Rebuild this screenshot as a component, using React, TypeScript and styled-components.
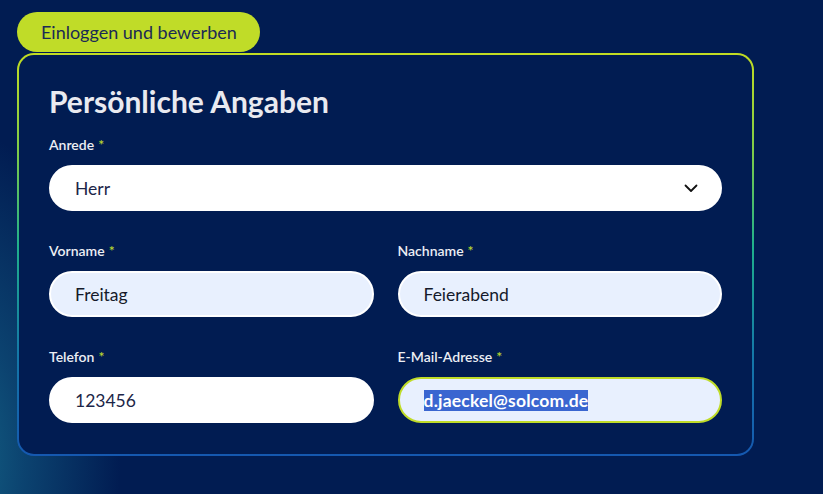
import React from "react";
import styled, { createGlobalStyle } from "styled-components";

const GlobalStyle = createGlobalStyle`
  html, body {
    margin: 0;
    padding: 0;
    background: #011c52;
  }
  body {
    font-family: Lato, "Open Sans", sans-serif;
    min-height: 494px;
    background:
      radial-gradient(ellipse 160px 330px at -40px 460px, rgba(20, 100, 134, 1) 0%, rgba(15, 80, 122, 0.75) 40%, rgba(1, 28, 82, 0) 100%),
      #011c52;
  }
`;

const Page = styled.div`
  padding: 12px 0 0 17px;
  min-height: 494px;
  box-sizing: border-box;
`;

const Tab = styled.button`
  display: flex;
  align-items: center;
  height: 40px;
  width: 243px;
  padding: 0 0 0 24px;
  border: none;
  border-radius: 20px;
  background: #c0dc28;
  color: #1b2a55;
  font-family: Lato, sans-serif;
  font-size: 18px;
  cursor: pointer;
  position: relative;
  z-index: 1;
`;

const Card = styled.section`
  box-sizing: border-box;
  width: 737px;
  margin-top: 1px;
  padding: 28px 30px 31px 30px;
  border: 2px solid transparent;
  border-radius: 17px;
  background:
    linear-gradient(#011c52, #011c52) padding-box,
    linear-gradient(180deg, #c2dc22 0%, #7ccb4a 25%, #1fb08c 48%, #1478a8 75%, #1558b0 100%) border-box;
`;

const Title = styled.h2`
  margin: 0 0 17px 0;
  color: #e9eaf0;
  font-size: 30px;
  line-height: 36px;
  font-weight: 700;
`;

const Grid = styled.div`
  display: grid;
  grid-template-columns: 1fr 1fr;
  column-gap: 24px;
  row-gap: 31px;
`;

const Field = styled.div<{ $wide?: boolean }>`
  display: flex;
  flex-direction: column;
  grid-column: ${(p) => (p.$wide ? "1 / -1" : "auto")};
`;

const Label = styled.label`
  display: block;
  height: 18px;
  color: #eceef4;
  font-size: 14px;
  font-weight: 600;
  line-height: 18px;
  margin-bottom: 11px;
`;

const Star = styled.span`
  color: #b9d62e;
  margin-left: 4px;
`;

const Control = styled.div<{ $fill?: string; $ring?: string }>`
  box-sizing: border-box;
  height: 46px;
  display: flex;
  align-items: center;
  padding: 0 22px 0 24px;
  border-radius: 23px;
  background: ${(p) => p.$fill ?? "#ffffff"};
  border: 2px solid ${(p) => p.$ring ?? "#ffffff"};
  color: #151a2a;
  font-size: 17.5px;
`;

const Value = styled.span<{ $tone?: string }>`
  flex: 1;
  color: ${(p) => p.$tone ?? "#151a2a"};
`;

const Selected = styled.span`
  background: #3a66d0;
  color: #ffffff;
  font-weight: 700;
  line-height: 25px;
  letter-spacing: 0.2px;
`;

const Chevron = () => (
  <svg width="14" height="9" viewBox="0 0 14 9" fill="none">
    <path d="M1.5 1.5 L7 7 L12.5 1.5" stroke="#111" strokeWidth="1.8" strokeLinecap="round" strokeLinejoin="round" />
  </svg>
);

export default function App() {
  return (
    <>
      <GlobalStyle />
      <Page>
        <Tab>Einloggen und bewerben</Tab>
        <Card>
          <Title>Persönliche Angaben</Title>
          <Grid>
            <Field $wide>
              <Label>
                Anrede<Star>*</Star>
              </Label>
              <Control>
                <Value $tone="#1c2548">Herr</Value>
                <Chevron />
              </Control>
            </Field>
            <Field>
              <Label>
                Vorname<Star>*</Star>
              </Label>
              <Control $fill="#e8f0fe">
                <Value>Freitag</Value>
              </Control>
            </Field>
            <Field>
              <Label>
                Nachname<Star>*</Star>
              </Label>
              <Control $fill="#e8f0fe">
                <Value>Feierabend</Value>
              </Control>
            </Field>
            <Field>
              <Label>
                Telefon<Star>*</Star>
              </Label>
              <Control>
                <Value $tone="#1c2548">123456</Value>
              </Control>
            </Field>
            <Field>
              <Label>
                E-Mail-Adresse<Star>*</Star>
              </Label>
              <Control $fill="#e8f0fe" $ring="#c0dc28">
                <Value>
                  <Selected>d.jaeckel@solcom.de</Selected>
                </Value>
              </Control>
            </Field>
          </Grid>
        </Card>
      </Page>
    </>
  );
}
